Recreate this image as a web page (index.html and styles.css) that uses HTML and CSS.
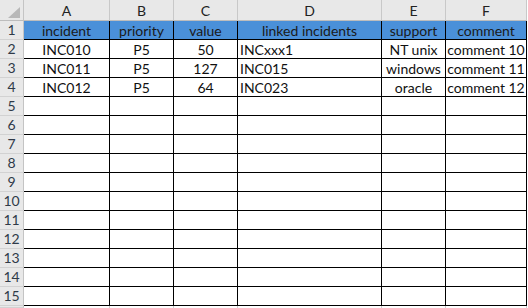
FILE: index.html
```html
<!DOCTYPE html>
<html>
<head>
<meta charset="utf-8">
<link rel="stylesheet" href="styles.css">
</head>
<body>
<div class="sheet">
  <div class="corner"><span class="tri"></span></div>
  <div class="colhead">A</div>
  <div class="colhead">B</div>
  <div class="colhead">C</div>
  <div class="colhead">D</div>
  <div class="colhead">E</div>
  <div class="colhead">F</div>

  <div class="rowhead">1</div>
  <div class="cell hd">incident</div>
  <div class="cell hd">priority</div>
  <div class="cell hd">value</div>
  <div class="cell hd">linked incidents</div>
  <div class="cell hd">support</div>
  <div class="cell hd">comment</div>

  <div class="rowhead">2</div>
  <div class="cell c">INC010</div>
  <div class="cell c">P5</div>
  <div class="cell c">50</div>
  <div class="cell l">INCxxx1</div>
  <div class="cell c">NT unix</div>
  <div class="cell c">comment 10</div>

  <div class="rowhead">3</div>
  <div class="cell c">INC011</div>
  <div class="cell c">P5</div>
  <div class="cell c">127</div>
  <div class="cell l">INC015</div>
  <div class="cell c">windows</div>
  <div class="cell c">comment 11</div>

  <div class="rowhead">4</div>
  <div class="cell c">INC012</div>
  <div class="cell c">P5</div>
  <div class="cell c">64</div>
  <div class="cell l">INC023</div>
  <div class="cell c">oracle</div>
  <div class="cell c">comment 12</div>

  <div class="rowhead">5</div><div class="cell"></div><div class="cell"></div><div class="cell"></div><div class="cell"></div><div class="cell"></div><div class="cell"></div>
  <div class="rowhead">6</div><div class="cell"></div><div class="cell"></div><div class="cell"></div><div class="cell"></div><div class="cell"></div><div class="cell"></div>
  <div class="rowhead">7</div><div class="cell"></div><div class="cell"></div><div class="cell"></div><div class="cell"></div><div class="cell"></div><div class="cell"></div>
  <div class="rowhead">8</div><div class="cell"></div><div class="cell"></div><div class="cell"></div><div class="cell"></div><div class="cell"></div><div class="cell"></div>
  <div class="rowhead">9</div><div class="cell"></div><div class="cell"></div><div class="cell"></div><div class="cell"></div><div class="cell"></div><div class="cell"></div>
  <div class="rowhead">10</div><div class="cell"></div><div class="cell"></div><div class="cell"></div><div class="cell"></div><div class="cell"></div><div class="cell"></div>
  <div class="rowhead">11</div><div class="cell"></div><div class="cell"></div><div class="cell"></div><div class="cell"></div><div class="cell"></div><div class="cell"></div>
  <div class="rowhead">12</div><div class="cell"></div><div class="cell"></div><div class="cell"></div><div class="cell"></div><div class="cell"></div><div class="cell"></div>
  <div class="rowhead">13</div><div class="cell"></div><div class="cell"></div><div class="cell"></div><div class="cell"></div><div class="cell"></div><div class="cell"></div>
  <div class="rowhead">14</div><div class="cell"></div><div class="cell"></div><div class="cell"></div><div class="cell"></div><div class="cell"></div><div class="cell"></div>
  <div class="rowhead">15</div><div class="cell"></div><div class="cell"></div><div class="cell"></div><div class="cell"></div><div class="cell"></div><div class="cell"></div>
  <div class="rowhead"></div><div class="cell blank"></div><div class="cell blank"></div><div class="cell blank"></div><div class="cell blank"></div><div class="cell blank"></div><div class="cell blank"></div>
</div>
</body>
</html>
```
FILE: styles.css
```css
html, body {
  margin: 0;
  padding: 0;
  background: #ffffff;
  overflow: hidden;
}

.sheet {
  display: grid;
  grid-template-columns: 24px 86px 64px 64px 144px 64px 81px;
  grid-template-rows: 21px repeat(15, 19px) 2px;
  height: 308px;
  overflow: hidden;
  font-family: Lato, "Liberation Sans", sans-serif;
  font-size: 14px;
  color: #111;
}

.corner {
  box-sizing: border-box;
  background: #e8e8e8;
  border-right: 1px solid #c4c4c4;
  border-bottom: 1px solid #bdbdbd;
  position: relative;
}

.corner .tri {
  position: absolute;
  right: 3px;
  bottom: 2px;
  width: 0;
  height: 0;
  border-left: 12px solid transparent;
  border-bottom: 11px solid #b8b8b8;
}

.colhead {
  box-sizing: border-box;
  background: #e8e8e8;
  border-right: 1px solid #c8c8c8;
  border-bottom: 1px solid #bdbdbd;
  display: flex;
  align-items: center;
  justify-content: center;
  color: #222;
  font-size: 14px;
  padding-top: 1px;
}

.rowhead {
  box-sizing: border-box;
  background: #e8e8e8;
  border-right: 1px solid #c4c4c4;
  border-bottom: 1px solid #d2d2d2;
  display: flex;
  align-items: flex-end;
  justify-content: center;
  color: #2f3a48;
  font-size: 14px;
  line-height: 16px;
  padding-bottom: 1px;
  overflow: hidden;
}

.cell {
  box-sizing: border-box;
  border-right: 1px solid #000;
  border-bottom: 1px solid #000;
  display: flex;
  align-items: flex-end;
  white-space: nowrap;
  overflow: hidden;
  line-height: 17px;
}

.cell.hd {
  background: #4a90d9;
  justify-content: center;
  color: #1a1a1a;
}

.cell.c {
  justify-content: center;
}

.cell.l {
  justify-content: flex-start;
  padding-left: 2px;
}

.cell.blank {
  border-right-color: #d0d0d0;
  border-bottom: none;
}
```
